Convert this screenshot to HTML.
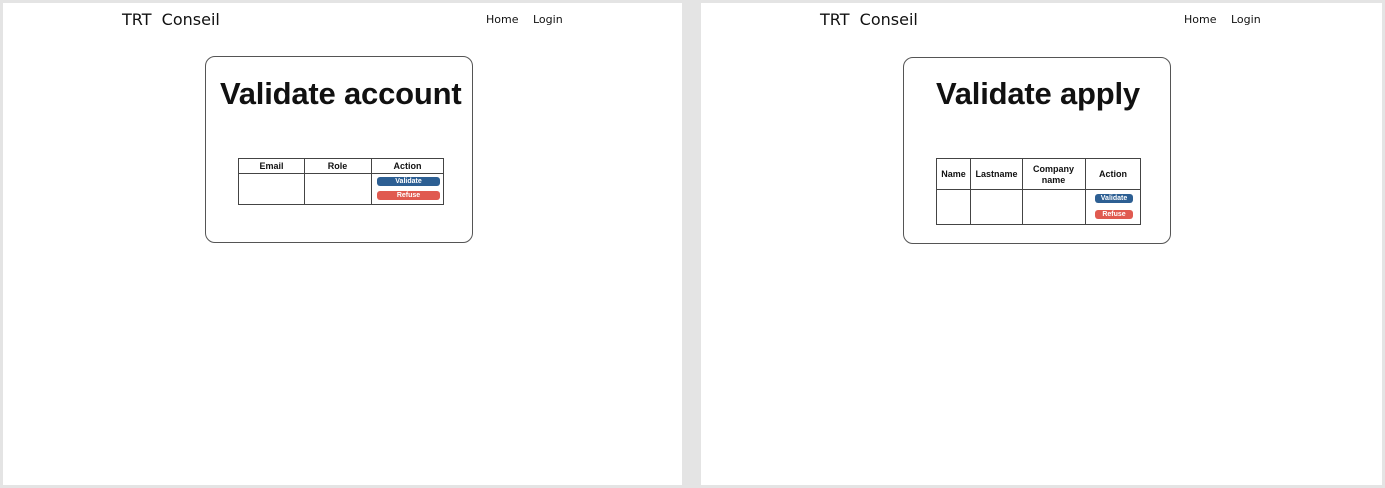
<!DOCTYPE html>
<html><head><meta charset="utf-8"><style>
*{margin:0;padding:0;box-sizing:border-box}
body{width:1385px;height:488px;background:#e4e4e4;position:relative;overflow:hidden;font-family:"DejaVu Sans","Liberation Sans",sans-serif;color:#111}
.p{position:absolute;top:3px;height:482px;background:#fff}
.a{position:absolute;white-space:nowrap}
.card{position:absolute;border:1px solid #555;border-radius:10px;width:268px;height:187px}
.t{position:absolute;border:1px solid #444}
.v{position:absolute;border-left:1px solid #444;top:0;bottom:0}
.h{position:absolute;border-top:1px solid #444;left:0;right:0}
.th{position:absolute;font-family:"Liberation Sans",sans-serif;font-size:9px;font-weight:bold;text-align:center;line-height:10px}
.btn{position:absolute;border-radius:3px;color:#fff;font-family:"Liberation Sans",sans-serif;font-weight:bold;font-size:7px;text-align:center;line-height:10px;height:9px}
.bl{background:#2d5f93}.rd{background:#e05a50}
.logo{font-size:16px;top:10px}
.nav{font-size:11px;top:13px}
.ttl{font-family:"Liberation Sans",sans-serif;font-size:31px;font-weight:bold;top:76px;letter-spacing:-0.2px}
</style></head><body>
<div class="p" style="left:3px;width:679px"></div>
<div class="p" style="left:701px;width:681px"></div>

<div class="a logo" style="left:122px">TRT&nbsp; Conseil</div>
<div class="a nav" style="left:486px">Home</div>
<div class="a nav" style="left:533px">Login</div>
<div class="a logo" style="left:820px">TRT&nbsp; Conseil</div>
<div class="a nav" style="left:1184px">Home</div>
<div class="a nav" style="left:1231px">Login</div>

<div class="card" style="left:205px;top:56px"></div>
<div class="a ttl" style="left:220px">Validate account</div>
<div class="t" style="left:238px;top:158px;width:206px;height:47px">
<div class="h" style="top:14px"></div>
<div class="v" style="left:65px"></div>
<div class="v" style="left:132px"></div>
</div>
<div class="th" style="left:238px;width:67px;top:161px">Email</div>
<div class="th" style="left:304px;width:67px;top:161px">Role</div>
<div class="th" style="left:371px;width:73px;top:161px">Action</div>
<div class="btn bl" style="left:377px;top:177px;width:63px">Validate</div>
<div class="btn rd" style="left:377px;top:191px;width:63px">Refuse</div>

<div class="card" style="left:903px;top:57px"></div>
<div class="a ttl" style="left:936px">Validate apply</div>
<div class="t" style="left:936px;top:158px;width:205px;height:67px">
<div class="h" style="top:30px"></div>
<div class="v" style="left:33px"></div>
<div class="v" style="left:85px"></div>
<div class="v" style="left:148px"></div>
</div>
<div class="th" style="left:936px;width:35px;top:169px">Name</div>
<div class="th" style="left:970px;width:53px;top:169px">Lastname</div>
<div class="th" style="left:1022px;width:63px;top:164px;line-height:11px">Company<br>name</div>
<div class="th" style="left:1085px;width:56px;top:169px">Action</div>
<div class="btn bl" style="left:1095px;top:194px;width:38px">Validate</div>
<div class="btn rd" style="left:1095px;top:210px;width:38px">Refuse</div>
</body></html>
